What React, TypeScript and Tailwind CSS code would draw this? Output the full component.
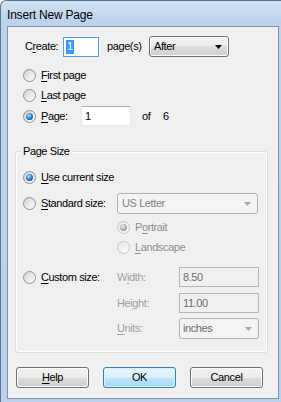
import React from "react";

const Radio = ({ checked = false, disabled = false }: { checked?: boolean; disabled?: boolean }) => (
  <span
    className={
      disabled
        ? "flex items-center justify-center w-[13px] h-[13px] shrink-0 rounded-full border border-[#c8c8c8] bg-[linear-gradient(135deg,#e8e8e8,#fbfbfb)]"
        : "flex items-center justify-center w-[13px] h-[13px] shrink-0 rounded-full border border-[#8e8f8f] bg-[linear-gradient(135deg,#d2d2d2,#fdfdfd)]"
    }
  >
    {checked && (
      <span
        className={
          disabled
            ? "w-[7px] h-[7px] rounded-full bg-[radial-gradient(circle_at_40%_35%,#ececec,#9c9c9c_70%)]"
            : "w-[7px] h-[7px] rounded-full bg-[radial-gradient(circle_at_40%_35%,#b4e2ff,#1f74c9_55%,#0b3c77)]"
        }
      />
    )}
  </span>
);

// label text with one underlined access key
const Acc = ({ pre = "", k, post = "" }: { pre?: string; k: string; post?: string }) => (
  <>
    {pre}
    <span className="underline underline-offset-[2px]">{k}</span>
    {post}
  </>
);

const Arrow = ({ color }: { color: string }) => (
  <svg width="7" height="4" viewBox="0 0 7 4" className="shrink-0">
    <path d="M0 0H7L3.5 4Z" fill={color} />
  </svg>
);

const TextBox = ({ value, w, disabled = false }: { value: string; w: string; disabled?: boolean }) => (
  <div
    className={
      disabled
        ? `${w} h-[20px] flex items-center pl-[3px] border border-[#b5b5b5] bg-[#f0f0f0] text-[#6d6d6d]`
        : `${w} h-[20px] flex items-center pl-[3px] border border-[#e3e9ef] border-t-[#abadb3] bg-white`
    }
  >
    {value}
  </div>
);

const Button = ({ children, primary = false }: { children: React.ReactNode; primary?: boolean }) => (
  <div
    className={
      primary
        ? "w-[73px] h-[21px] flex items-center justify-center rounded-[3px] border border-[#3c7fb1] shadow-[inset_0_0_0_1px_#d7efff] bg-[linear-gradient(to_bottom,#eaf6fd_0%,#d9f0fc_50%,#bee6fd_50%,#a7d9f5_100%)]"
        : "w-[73px] h-[21px] flex items-center justify-center rounded-[3px] border border-[#707070] shadow-[inset_0_0_0_1px_#fcfcfc] bg-[linear-gradient(to_bottom,#f2f2f2_0%,#ebebeb_50%,#dddddd_50%,#cfcfcf_100%)]"
    }
  >
    {children}
  </div>
);

export default function App() {
  return (
    <div className="w-[281px] h-[402px] overflow-hidden flex flex-col rounded-tl-[6px] border-l border-t border-[#5a7596] bg-[linear-gradient(to_bottom,#d2e2f3,#bdd3ea_20px,#b9d1ea)] font-['Liberation_Sans',Arial,sans-serif] text-black">
      {/* title bar */}
      <div className="h-[25px] pl-[6px] pt-[2px] flex items-center text-[12px] tracking-[-0.2px]">Insert New Page</div>

      {/* client area */}
      <div className="ml-[6px] w-[272px] h-[373px] border border-[#7f93ab] bg-[#f0f0f0] text-[11px] tracking-[-0.4px] flex flex-col">
        {/* create row */}
        <div className="mt-[9px] h-[21px] pl-[17px] flex items-center">
          <span className="w-[38px]">
            <Acc pre="C" k="r" post="eate:" />
          </span>
          <div className="w-[36px] h-[20px] flex items-center pl-[2px] border border-[#569de5] bg-white">
            <span className="h-[14px] px-[1px] flex items-center bg-[#3399ff] text-white">1</span>
          </div>
          <span className="ml-[8px] w-[42px]">page(s)</span>
          <div className="w-[80px] h-[21px] flex items-center justify-between pl-[4px] pr-[6px] rounded-[3px] border border-[#707070] shadow-[inset_0_0_0_1px_#fcfcfc] bg-[linear-gradient(to_bottom,#f2f2f2_0%,#ebebeb_50%,#dddddd_50%,#cfcfcf_100%)]">
            <span>After</span>
            <Arrow color="#000" />
          </div>
        </div>

        {/* position radios */}
        <div className="mt-[8px] pl-[15px] flex flex-col">
          <div className="h-[20px] flex items-center">
            <Radio />
            <span className="ml-[5px]">
              <Acc k="F" post="irst page" />
            </span>
          </div>
          <div className="h-[21px] flex items-center">
            <Radio />
            <span className="ml-[5px]">
              <Acc k="L" post="ast page" />
            </span>
          </div>
          <div className="h-[20px] flex items-center">
            <Radio checked />
            <span className="ml-[5px] w-[40px]">
              <Acc k="P" post="age:" />
            </span>
            <TextBox value="1" w="w-[50px]" />
            <span className="ml-[11px] w-[21px]">of</span>
            <span>6</span>
          </div>
        </div>

        {/* page size group */}
        <div className="relative mt-[25px] ml-[7px] w-[253px] h-[202px] rounded-[3px] border border-[#d5dfe5] shadow-[inset_0_0_0_1px_#ffffff] flex flex-col pl-[7px]">
          <span className="absolute -top-[7px] left-[5px] px-[2px] leading-[13px] bg-[#f0f0f0]">Page Size</span>

          <div className="mt-[15px] h-[20px] flex items-center">
            <Radio checked />
            <span className="ml-[5px]">
              <Acc k="U" post="se current size" />
            </span>
          </div>

          <div className="mt-[6px] h-[21px] flex items-center">
            <div className="w-[94px] flex items-center">
              <Radio />
              <span className="ml-[5px]">
                <Acc k="S" post="tandard size:" />
              </span>
            </div>
            <div className="w-[141px] h-[21px] flex items-center justify-between pl-[4px] pr-[6px] rounded-[3px] border border-[#adb2b5] bg-[#f4f4f4] text-[#838383]">
              <span>US Letter</span>
              <Arrow color="#a8a8a8" />
            </div>
          </div>

          <div className="mt-[3px] pl-[94px] flex flex-col text-[#8d8d8d]">
            <div className="h-[20px] flex items-center">
              <Radio checked disabled />
              <span className="ml-[5px]">
                <Acc pre="P" k="o" post="rtrait" />
              </span>
            </div>
            <div className="h-[20px] flex items-center">
              <Radio disabled />
              <span className="ml-[5px]">
                <Acc k="L" post="andscape" />
              </span>
            </div>
          </div>

          <div className="mt-[10px] h-[20px] flex items-center">
            <div className="w-[94px] flex items-center">
              <Radio />
              <span className="ml-[5px]">
                <Acc k="C" post="ustom size:" />
              </span>
            </div>
            <span className="w-[62px] text-[#a0a0a0]">
              <Acc pre="W" k="i" post="dth:" />
            </span>
            <TextBox value="8.50" w="w-[80px]" disabled />
          </div>

          <div className="mt-[6px] h-[20px] pl-[94px] flex items-center">
            <span className="w-[62px] text-[#a0a0a0]">
              <Acc pre="Hei" k="g" post="ht:" />
            </span>
            <TextBox value="11.00" w="w-[80px]" disabled />
          </div>

          <div className="mt-[5px] h-[21px] pl-[94px] flex items-center">
            <span className="w-[62px] text-[#a0a0a0]">
              <Acc k="U" post="nits:" />
            </span>
            <div className="w-[80px] h-[21px] flex items-center justify-between pl-[3px] pr-[6px] rounded-[3px] border border-[#adb2b5] bg-[#f4f4f4] text-[#6d6d6d]">
              <span>inches</span>
              <Arrow color="#a8a8a8" />
            </div>
          </div>
        </div>

        {/* buttons */}
        <div className="mt-[14px] pl-[8px] flex gap-[14px]">
          <Button>
            <Acc k="H" post="elp" />
          </Button>
          <Button primary>OK</Button>
          <Button>Cancel</Button>
        </div>
      </div>
    </div>
  );
}
